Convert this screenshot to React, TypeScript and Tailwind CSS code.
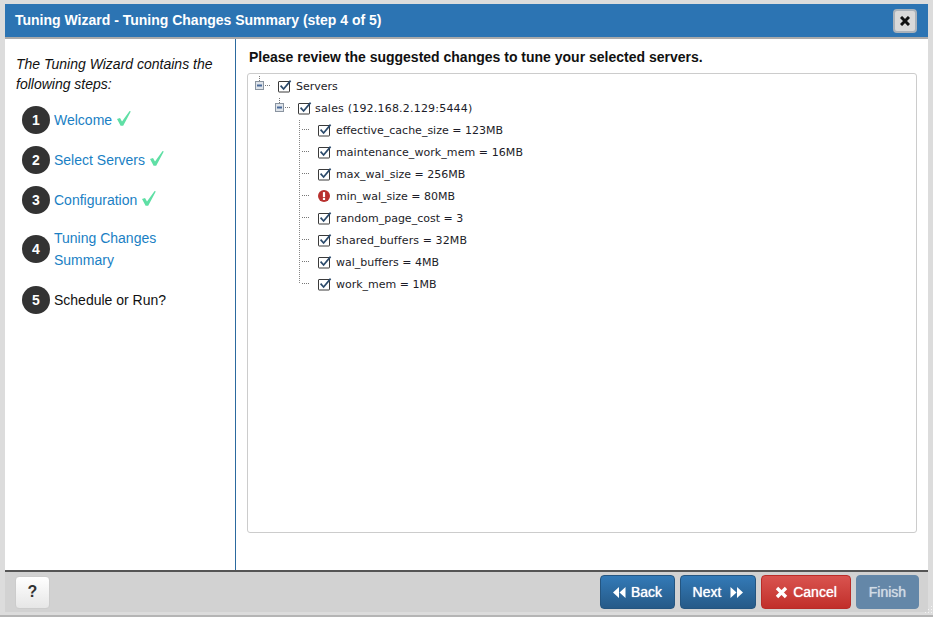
import React from "react";

const Check = () => (
  <svg width="14" height="14" viewBox="0 0 14 14" className="shrink-0 block">
    <rect x="0.5" y="1.5" width="11" height="10.5" rx="0.5" fill="#fff" stroke="#3a3a3a" strokeWidth="1" />
    <path d="M2.6 5.6 L5.6 9 L12.6 0.6" fill="none" stroke="#2b4a6b" strokeWidth="1.7" />
  </svg>
);

const Err = () => (
  <svg width="14" height="14" viewBox="0 0 14 14" className="shrink-0 block">
    <circle cx="6" cy="6" r="6" fill="#b8312f" />
    <rect x="4.9" y="2.1" width="2.2" height="5" fill="#fff" />
    <rect x="4.9" y="7.9" width="2.2" height="2.1" fill="#fff" />
  </svg>
);

const Expander = () => (
  <svg width="23" height="22" viewBox="0 0 23 22" className="block shrink-0">
    <path d="M4.5 0 V5" stroke="#777" strokeDasharray="1 1" />
    <rect x="0.5" y="5.5" width="8" height="8" fill="#dfe4ea" stroke="#8a94a0" />
    <rect x="2" y="8.5" width="5" height="2" fill="#4a6a9a" />
    <path d="M10 9.5 H16" stroke="#777" strokeDasharray="1 1" />
  </svg>
);

const Tick = () => (
  <svg width="14" height="15" viewBox="0 0 14 15" className="inline-block ml-[5px] relative -top-[3px]">
    <path d="M0 8 L3 7 L5 10.5 L12.6 0 L13.8 0.5 L6.2 14.8 L3.6 14.8 Z" fill="#5fdfa5" />
  </svg>
);

const Step = ({ n, children, check, extra }: { n: number; children: React.ReactNode; check?: boolean; extra?: string }) => (
  <div className={"flex items-center gap-[4px] ml-[6px] " + (extra ?? "")}>
    <div className="w-[28px] h-[28px] rounded-full bg-[#333] text-white flex items-center justify-center text-[14px] font-bold shrink-0">{n}</div>
    <div className="text-[14px] leading-[22px]">
      {children}
      {check && <Tick />}
    </div>
  </div>
);

const items: [string, boolean?, string?][] = [
  ["effective_cache_size = 123MB"],
  ["maintenance_work_mem = 16MB", false, "tracking-[0.07px]"],
  ["max_wal_size = 256MB"],
  ["min_wal_size = 80MB", true],
  ["random_page_cost = 3"],
  ["shared_buffers = 32MB", false, "tracking-[0.1px]"],
  ["wal_buffers = 4MB"],
  ["work_mem = 1MB"],
];

const btn =
  "h-[34px] rounded-[4px] text-white text-[14px] flex items-center justify-center gap-[5px] border [text-shadow:0_0_1px_#ffffff]";

export default function App() {
  return (
    <div className="relative w-[933px] h-[617px] bg-[#dcdcdc] pt-[4px] pl-[5px] pr-[5px] pb-[3px] border-b-[2px] border-[#b5b5b5] font-['Liberation_Sans',sans-serif] text-[#111] overflow-hidden">
      <div className="h-full flex flex-col bg-white">
        <div className="h-[35px] shrink-0 bg-[#2c74b3] border-b-[2px] border-[#aaa] flex items-center justify-between pl-[10px] pr-[11px]">
          <span className="text-white font-bold text-[14px]">Tuning Wizard - Tuning Changes Summary (step 4 of 5)</span>
          <div className="w-[24px] h-[24px] rounded-[4px] bg-[#d9d9d9] border-2 border-[#aab2ba] flex items-center justify-center">
            <svg width="10" height="10" viewBox="0 0 10 10"><path d="M1 1 L9 9 M9 1 L1 9" stroke="#111" strokeWidth="3" /></svg>
          </div>
        </div>
        <div className="flex-1 flex min-h-0">
          <div className="w-[231px] shrink-0 border-r border-[#2c6a9f] pl-[11px] pr-[10px] pt-[15px]">
            <p className="italic text-[14px] leading-[20px] mb-[12px]">The Tuning Wizard contains the following steps:</p>
            <div className="flex flex-col gap-[12px] text-[#1a7fc4]">
              <Step n={1} check>Welcome</Step>
              <Step n={2} check>Select Servers</Step>
              <Step n={3} check>Configuration</Step>
              <Step n={4} extra="mt-[1px]">Tuning Changes<br />Summary</Step>
              <div className="text-[#111] mt-[3px]"><Step n={5}>Schedule or Run?</Step></div>
            </div>
          </div>
          <div className="flex-1 min-w-0 pl-[11px] pr-[11px] pt-[9px] pb-[37px] flex flex-col">
            <h1 className="text-[14px] font-bold leading-[18px] mb-[7px] ml-[2px]">Please review the suggested changes to tune your selected servers.</h1>
            <div className="flex-1 border border-[#ccc] rounded-[3px] font-['DejaVu_Sans',sans-serif] text-[11px] text-[#1c1c28] pt-[2px]">
              <div className="h-[22px] flex items-center pl-[7px]">
                <Expander />
                <Check />
                <span className="ml-[4px]">Servers</span>
              </div>
              <div className="h-[22px] flex items-center pl-[27px]">
                <Expander />
                <Check />
                <span className="ml-[3px] tracking-[0.2px]">sales (192.168.2.129:5444)</span>
              </div>
              <div className="ml-[51px] border-l border-dotted border-[#888] flex flex-col">
                {items.map(([t, e, track], i) => (
                  <div key={t} className={"h-[22px] shrink-0 flex items-center " + (i === items.length - 1 ? "-mb-[13px]" : "")}>
                    <svg width="18" height="22" viewBox="0 0 18 22" className="block shrink-0">
                      <path d="M2 9.5 H10" stroke="#777" strokeDasharray="1 1" />
                    </svg>
                    {e ? <Err /> : <Check />}
                    <span className={"ml-[4px] " + (track ?? "")}>{t}</span>
                  </div>
                ))}
              </div>
            </div>
          </div>
        </div>
        <div className="h-[42px] shrink-0 bg-[#d2d2d2] border-t-[2px] border-[#555] flex items-center justify-between pl-[10px] pr-[9px]">
          <div className="w-[35px] h-[33px] rounded-[4px] bg-linear-to-b from-white to-[#e6e6e6] border border-[#ccc] flex items-center justify-center font-bold text-[16px] text-[#333]">?</div>
          <div className="flex gap-[5px]">
            <div className={btn + " w-[75px] bg-linear-to-b from-[#337ab7] to-[#265a88] border-[#245580]"}>
              <svg width="13" height="11" viewBox="0 0 13 11" fill="#fff"><path d="M6 0v11L0 5.5zM12.5 0v11L6.5 5.5z" /></svg>
              Back
            </div>
            <div className={btn + " w-[76px] bg-linear-to-b from-[#337ab7] to-[#265a88] border-[#245580]"}>
              Next
              <svg width="13" height="11" viewBox="0 0 13 11" fill="#fff" className="ml-[4px]"><path d="M0.5 0v11L6.5 5.5zM7 0v11L13 5.5z" /></svg>
            </div>
            <div className={btn + " w-[90px] bg-linear-to-b from-[#d9534f] to-[#c12e2a] border-[#b92c28]"}>
              <svg width="13" height="13" viewBox="0 0 13 13"><path d="M2 2 L11 11 M11 2 L2 11" stroke="#fff" strokeWidth="3.4" /></svg>
              Cancel
            </div>
            <div className={btn + " w-[63px] bg-[#6487a8] border-[#6487a8]"}><span className="opacity-70">Finish</span></div>
          </div>
        </div>
      </div>
      <svg width="10" height="9" viewBox="0 0 10 9" className="absolute right-0 bottom-0" fill="#f4f4f4">
        <rect x="8" y="0" width="1" height="1" /><rect x="8" y="3" width="1" height="1" /><rect x="5" y="3" width="1" height="1" />
        <rect x="8" y="6" width="1" height="1" /><rect x="5" y="6" width="1" height="1" /><rect x="2" y="6" width="1" height="1" />
      </svg>
    </div>
  );
}
